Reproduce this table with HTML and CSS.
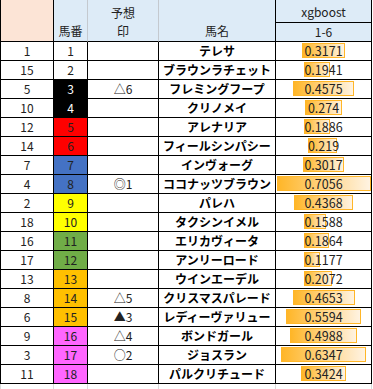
FILE: index.html
```html
<!DOCTYPE html>
<html lang="ja">
<head>
<meta charset="utf-8">
<title>予想</title>
<link rel="stylesheet" href="styles.css">
</head>
<body>
<div class="sheet">
  <div class="cell h-rank"></div>
  <div class="cell h-num">馬番</div>
  <div class="cell h-mark"><span>予想</span><span>印</span></div>
  <div class="cell h-name">馬名</div>
  <div class="cell h-model">xgboost</div>
  <div class="cell h-range">1-6</div>

  <div class="cell rank">1</div><div class="cell num">1</div><div class="cell mark"></div><div class="cell name">テレサ</div><div class="cell score"><div class="bar" style="width:42.2px"></div><span class="val">0.3171</span></div>
  <div class="cell rank">15</div><div class="cell num">2</div><div class="cell mark"></div><div class="cell name">ブラウンラチェット</div><div class="cell score"><div class="bar" style="width:25.9px"></div><span class="val">0.1941</span></div>
  <div class="cell rank">5</div><div class="cell num w-black">3</div><div class="cell mark">△6</div><div class="cell name">フレミングフープ</div><div class="cell score"><div class="bar" style="width:60.9px"></div><span class="val">0.4575</span></div>
  <div class="cell rank">10</div><div class="cell num w-black">4</div><div class="cell mark"></div><div class="cell name">クリノメイ</div><div class="cell score"><div class="bar" style="width:36.5px"></div><span class="val">0.274</span></div>
  <div class="cell rank">12</div><div class="cell num w-red">5</div><div class="cell mark"></div><div class="cell name">アレナリア</div><div class="cell score"><div class="bar" style="width:25.1px"></div><span class="val">0.1886</span></div>
  <div class="cell rank">14</div><div class="cell num w-red">6</div><div class="cell mark"></div><div class="cell name">フィールシンパシー</div><div class="cell score"><div class="bar" style="width:29.2px"></div><span class="val">0.219</span></div>
  <div class="cell rank">7</div><div class="cell num w-blue">7</div><div class="cell mark"></div><div class="cell name">インヴォーグ</div><div class="cell score"><div class="bar" style="width:40.2px"></div><span class="val">0.3017</span></div>
  <div class="cell rank">4</div><div class="cell num w-blue">8</div><div class="cell mark">◎1</div><div class="cell name">ココナッツブラウン</div><div class="cell score"><div class="bar" style="width:94px"></div><span class="val">0.7056</span></div>
  <div class="cell rank">2</div><div class="cell num w-yellow">9</div><div class="cell mark"></div><div class="cell name">パレハ</div><div class="cell score"><div class="bar" style="width:58.2px"></div><span class="val">0.4368</span></div>
  <div class="cell rank">18</div><div class="cell num w-yellow">10</div><div class="cell mark"></div><div class="cell name">タクシンイメル</div><div class="cell score"><div class="bar" style="width:21.2px"></div><span class="val">0.1588</span></div>
  <div class="cell rank">16</div><div class="cell num w-green">11</div><div class="cell mark"></div><div class="cell name">エリカヴィータ</div><div class="cell score"><div class="bar" style="width:24.8px"></div><span class="val">0.1864</span></div>
  <div class="cell rank">17</div><div class="cell num w-green">12</div><div class="cell mark"></div><div class="cell name">アンリーロード</div><div class="cell score"><div class="bar" style="width:15.7px"></div><span class="val">0.1177</span></div>
  <div class="cell rank">13</div><div class="cell num w-orange">13</div><div class="cell mark"></div><div class="cell name">ウインエーデル</div><div class="cell score"><div class="bar" style="width:27.6px"></div><span class="val">0.2072</span></div>
  <div class="cell rank">8</div><div class="cell num w-orange">14</div><div class="cell mark">△5</div><div class="cell name">クリスマスパレード</div><div class="cell score"><div class="bar" style="width:62px"></div><span class="val">0.4653</span></div>
  <div class="cell rank">6</div><div class="cell num w-orange">15</div><div class="cell mark">▲3</div><div class="cell name">レディーヴァリュー</div><div class="cell score"><div class="bar" style="width:74.5px"></div><span class="val">0.5594</span></div>
  <div class="cell rank">9</div><div class="cell num w-pink">16</div><div class="cell mark">△4</div><div class="cell name">ボンドガール</div><div class="cell score"><div class="bar" style="width:66.5px"></div><span class="val">0.4988</span></div>
  <div class="cell rank">3</div><div class="cell num w-pink">17</div><div class="cell mark">○2</div><div class="cell name">ジョスラン</div><div class="cell score"><div class="bar" style="width:84.6px"></div><span class="val">0.6347</span></div>
  <div class="cell rank">11</div><div class="cell num w-pink">18</div><div class="cell mark"></div><div class="cell name">パルクリチュード</div><div class="cell score"><div class="bar" style="width:45.6px"></div><span class="val">0.3424</span></div>

  <div class="fill first"></div><div class="fill"></div><div class="fill"></div><div class="fill"></div><div class="fill"></div>
</div>
</body>
</html>
```
FILE: styles.css
```css
html, body {
  margin: 0;
  padding: 0;
  background: #fff;
}
body {
  font-family: "Noto Sans CJK JP", "Noto Sans", sans-serif;
  color: #222;
}
.sheet {
  display: grid;
  grid-template-columns: 54px 34px 71px 117px 96px;
  grid-template-rows: 23px 19px repeat(18, 19px) 8px;
  width: max-content;
}
.cell {
  box-sizing: border-box;
  border-right: 1px solid #000;
  border-bottom: 1px solid #000;
  display: flex;
  align-items: center;
  justify-content: center;
  font-size: 12px;
  line-height: 1;
  white-space: nowrap;
}
.h-rank, .rank {
  border-left: 1px solid #000;
}
.h-rank, .h-num, .h-mark, .h-name {
  grid-row: span 2;
}
.h-rank {
  background: #fce4d6;
}
.h-num, .h-mark, .h-name, .h-model, .h-range {
  background: #ddebf7;
  align-items: flex-end;
  padding-bottom: 4px;
}
.h-num, .h-mark {
  border-right-color: #c4c9cf;
}
.h-mark {
  flex-direction: column;
  align-items: center;
  justify-content: flex-end;
  gap: 6px;
}
.h-model {
  padding-bottom: 4px;
}
.h-range {
  padding-bottom: 3px;
}
.name {
  font-weight: 700;
  color: #000;
}
.mark {
  color: #222;
}
.w-black { background: #000; color: #fff; }
.w-red { background: #ff0000; }
.w-blue { background: #4472c4; }
.w-yellow { background: #ffff00; }
.w-green { background: #70ad47; }
.w-orange { background: #ffc000; }
.w-pink { background: #ff66ff; }
.score {
  display: grid;
  align-items: center;
  justify-items: center;
}
.score > * {
  grid-area: 1 / 1;
}
.bar {
  justify-self: start;
  align-self: start;
  box-sizing: border-box;
  height: 15px;
  margin-top: 1px;
  border: 1px solid #ffb628;
  background: linear-gradient(to right, #ffb628, #fff3e2);
}
.val {
  position: relative;
  font-size: 12.5px;
}
.fill {
  box-sizing: border-box;
  border-right: 1px solid #d9d9d9;
}
.fill.first {
  border-left: 1px solid #d9d9d9;
}
```
